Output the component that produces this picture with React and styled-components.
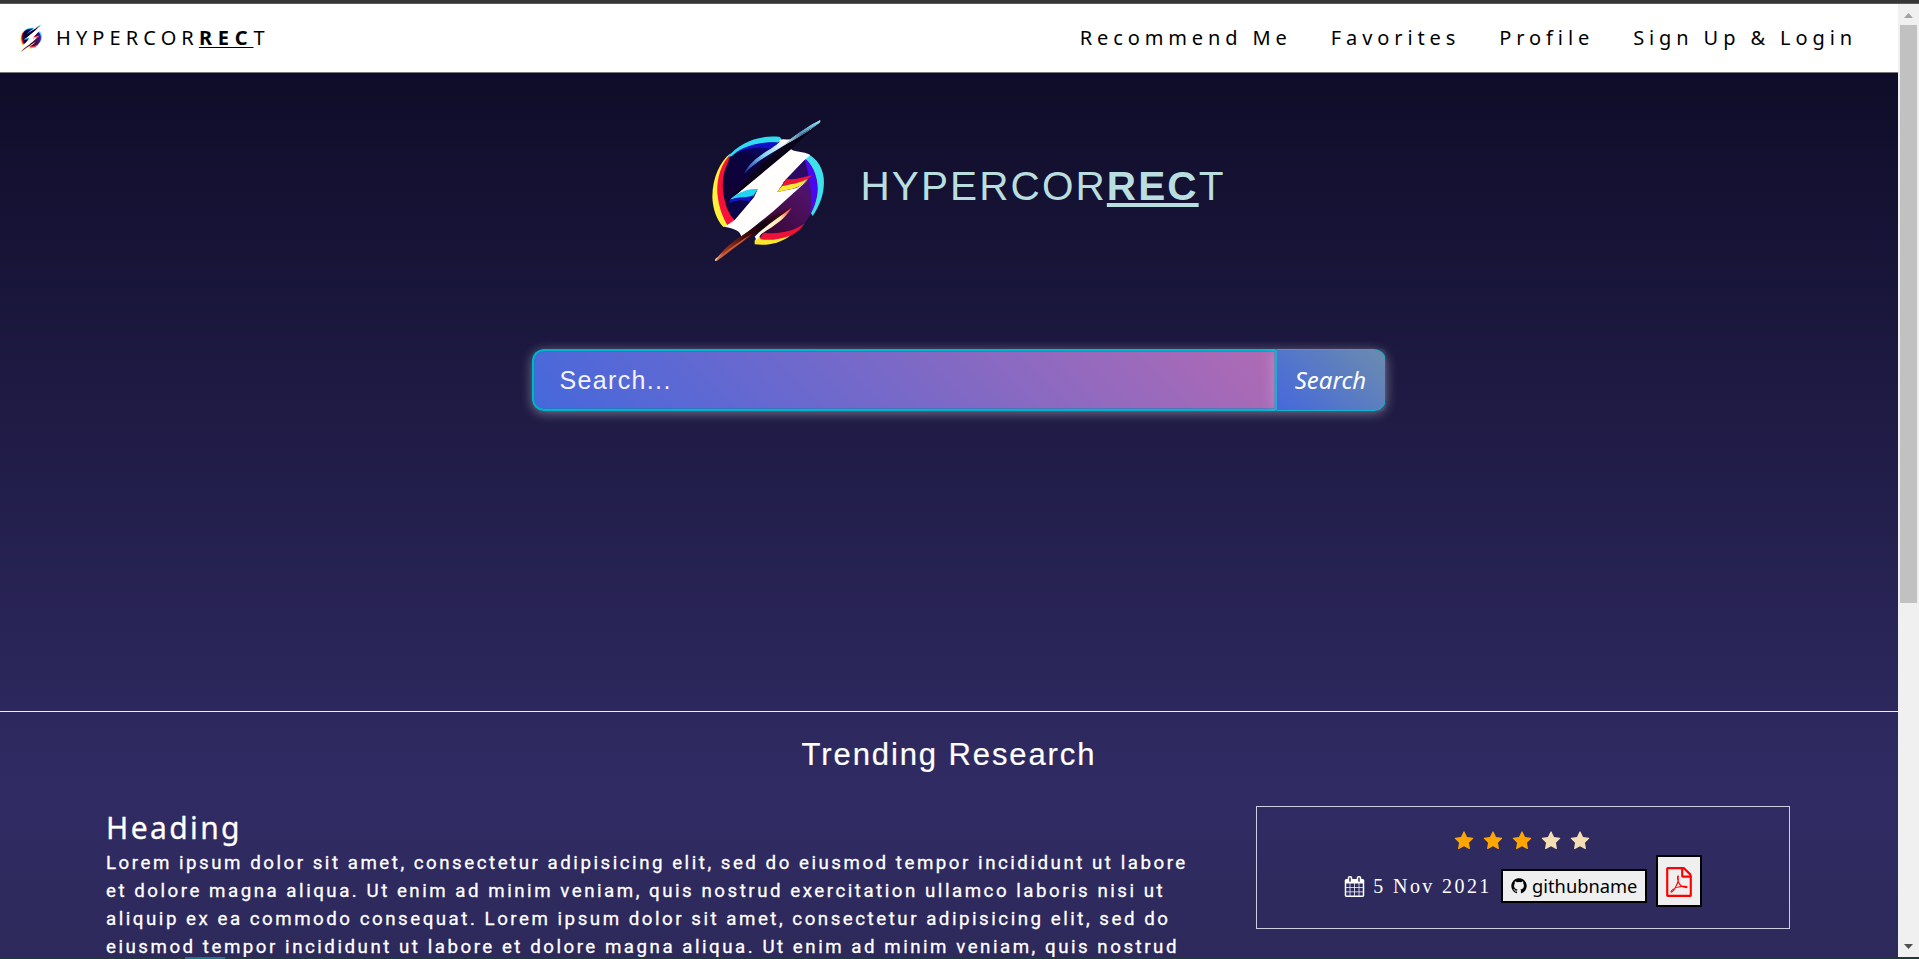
import React from "react";
import styled, { createGlobalStyle } from "styled-components";

const GlobalStyle = createGlobalStyle`
  * { box-sizing: border-box; }
  html, body { margin: 0; padding: 0; overflow: hidden; }
`;

const sans = `"Liberation Sans", Arial, sans-serif`;
const humanist = `"Noto Sans", "Open Sans", sans-serif`;

const Window = styled.div`
  display: flex;
  flex-direction: column;
  width: 1919px;
  height: 959px;
  overflow: hidden;
`;

const TopEdge = styled.div`
  flex: none;
  height: 4px;
  background: #363636;
  border-bottom: 1px solid #5b5b5b;
`;

const BottomEdge = styled.div`
  flex: none;
  display: flex;
  height: 2px;
  padding-left: 185px;
  background: #1e3a34;
`;

const EdgeMark = styled.div`
  width: 40px;
  background: #177a7c;
`;

const Viewport = styled.div`
  flex: 1;
  min-height: 0;
  display: flex;
`;

const Page = styled.div`
  flex: 1;
  min-width: 0;
  display: flex;
  flex-direction: column;
  overflow: hidden;
  background: linear-gradient(to bottom, #0f0c29, #302b63, #24243e) 0 68px / 100% 1440px;
`;

const ScrollTrack = styled.div`
  flex: none;
  display: flex;
  flex-direction: column;
  align-items: center;
  width: 21px;
  background: #f0f0f0;
`;

const ScrollArrow = styled.svg`
  flex: none;
  display: block;
  width: 21px;
  height: 21px;
  fill: ${(p) => p.$color};
`;

const ScrollThumb = styled.div`
  width: 17px;
  height: 578px;
  margin-bottom: auto;
  background: #c1c1c1;
`;

const NavBar = styled.header`
  flex: none;
  display: flex;
  align-items: center;
  height: 69px;
  padding: 0 41px 0 16px;
  background: #fff;
  border-bottom: 1px solid #777;
  font: 20px/28px ${humanist};
  color: #000;
`;

const Brand = styled.div`
  display: flex;
  align-items: center;
  gap: 9px;
  letter-spacing: 5.1px;
`;

const Underlined = styled.b`
  letter-spacing: ${(p) => p.$spacing};
  text-decoration: underline;
  text-decoration-thickness: ${(p) => p.$thick};
  text-underline-offset: ${(p) => p.$offset};
  text-decoration-skip-ink: none;
`;

const NavLinks = styled.nav`
  display: flex;
  gap: 39px;
  margin-left: auto;
  letter-spacing: 4.9px;
`;

const NavLink = styled.span`
  white-space: nowrap;
`;

const LogoMark = styled.svg`
  flex: none;
  display: block;
  width: ${(p) => p.$w}px;
  height: ${(p) => p.$h}px;
`;

const Hero = styled.section`
  flex: none;
  display: flex;
  flex-direction: column;
  align-items: center;
  height: 639px;
  border-bottom: 1px solid #f1effa;
`;

const HeroTitle = styled.div`
  display: flex;
  align-items: flex-start;
  height: 249px;
  margin-top: 27px;
  margin-left: 17px;
  gap: 11px;
`;

const HeroName = styled.h1`
  margin: 61px 0 0;
  font: 400 40.5px/50px ${sans};
  letter-spacing: 2.1px;
  color: #b9dedf;
  white-space: nowrap;
`;

const SearchBar = styled.form`
  display: flex;
  height: 62px;
  margin-left: 19px;
  width: 854px;
  border-radius: 12px;
  box-shadow: 0 2px 12px rgba(255, 255, 255, 0.4);
`;

const SearchField = styled.div`
  flex: 1;
  display: flex;
  align-items: center;
  padding: 0 0 0 26px;
  border: 2px solid #00b4cc;
  border-right: 0;
  border-radius: 12px 0 0 12px;
  background: linear-gradient(45deg, #4568dc, #b06ab3);
  box-shadow: inset 0 0 0 1px rgba(20, 130, 180, 0.55);
  font: 25px/30px ${sans};
  letter-spacing: 1.35px;
  color: #f4f2fb;
`;

const SearchButton = styled.button`
  width: 111px;
  padding: 0;
  border: 1px solid #12b3cc;
  border-left: 2px solid #2ba6cf;
  border-radius: 0 12px 12px 0;
  background: linear-gradient(45deg, #4568dc, #6b8cae);
  box-shadow: -2px 0 14px rgba(255, 255, 255, 0.22);
  clip-path: inset(0 0 0 -16px);
  font: italic 24px/30px ${humanist};
  color: #fff;
`;

const Trending = styled.section`
  flex: 1;
  min-height: 0;
  display: flex;
  flex-direction: column;
  padding-top: 25px;
`;

const SectionTitle = styled.h2`
  margin: 0;
  text-align: center;
  font: 400 31px/36px ${sans};
  letter-spacing: 1.9px;
  color: #fff;
  -webkit-text-stroke: 0.2px #fff;
`;

const Entry = styled.article`
  display: flex;
  align-items: flex-start;
  justify-content: space-between;
  padding: 33px 108px 0 106px;
`;

const EntryText = styled.div`
  width: 1110px;
  padding-top: 2px;
  color: #fff;
  -webkit-text-stroke: 0.3px #fff;
`;

const EntryHeading = styled.h3`
  margin: 0 0 1px;
  font: 400 30px/40px ${humanist};
  letter-spacing: 2.4px;
`;

const Abstract = styled.p`
  margin: 0;
  font: 400 18.72px/28.08px Roboto, sans-serif;
  letter-spacing: 2.52px;
`;

const Line = styled.span`
  display: block;
  white-space: nowrap;
`;

const MetaCard = styled.aside`
  display: flex;
  flex-direction: column;
  align-items: center;
  width: 534px;
  height: 123px;
  padding-top: 24px;
  border: 1px solid #cfcde0;
`;

const Stars = styled.div`
  display: flex;
  gap: 9px;
  margin-right: 2px;
`;

const Icon = styled.svg`
  flex: none;
  display: block;
  width: ${(p) => p.$size}px;
  height: ${(p) => p.$size}px;
  fill: ${(p) => p.$color};
`;

const MetaRow = styled.div`
  display: flex;
  align-items: flex-start;
  margin-top: 4px;
`;

const DateLabel = styled.div`
  display: flex;
  align-items: center;
  gap: 8px;
  height: 34px;
  margin: 14px 9px 0 0;
  font: 20px/24px "Liberation Serif", "Times New Roman", serif;
  letter-spacing: 2.4px;
  color: #fff;
  white-space: nowrap;
`;

const GithubButton = styled.button`
  display: flex;
  align-items: center;
  justify-content: center;
  gap: 4px;
  width: 146px;
  height: 34px;
  margin: 14px 9px 0 0;
  padding: 0;
  border: 2px solid #000;
  background: #efefef;
  font: 18.3px/24px ${humanist};
  color: #000;
`;

const PdfButton = styled.button`
  display: flex;
  align-items: center;
  justify-content: center;
  width: 46px;
  height: 52px;
  padding: 2px 0 0;
  border: 2px solid #000;
  background: #efefef;
`;

const paths = {
  star: "M1728 647q0 22-26 48l-363 354 86 500q1 7 1 20 0 21-10.5 35.5t-30.5 14.5q-19 0-40-12l-449-236-449 236q-22 12-40 12-21 0-31.5-14.5t-10.5-35.5q0-6 2-20l86-500-364-354q-25-27-25-48 0-37 56-46l502-73 225-455q19-41 49-41t49 41l225 455 502 73q56 9 56 46z",
  calendar:
    "M192 1664h288v-288h-288v288zm352 0h320v-288h-320v288zm-352-352h288v-320h-288v320zm352 0h320v-320h-320v320zm-352-384h288v-288h-288v288zm736 736h320v-288h-320v288zm-384-736h320v-288h-320v288zm768 736h288v-288h-288v288zm-384-352h320v-320h-320v320zm-352-864v-288q0-13-9.5-22.5t-22.5-9.5h-64q-13 0-22.5 9.5t-9.5 22.5v288q0 13 9.5 22.5t22.5 9.5h64q13 0 22.5-9.5t9.5-22.5zm736 864h288v-320h-288v320zm-384-384h320v-288h-320v288zm384 0h288v-288h-288v288zm32-480v-288q0-13-9.5-22.5t-22.5-9.5h-64q-13 0-22.5 9.5t-9.5 22.5v288q0 13 9.5 22.5t22.5 9.5h64q13 0 22.5-9.5t9.5-22.5zm384-64v1280q0 52-38 90t-90 38h-1408q-52 0-90-38t-38-90v-1280q0-52 38-90t90-38h128v-96q0-66 47-113t113-47h64q66 0 113 47t47 113v96h384v-96q0-66 47-113t113-47h64q66 0 113 47t47 113v96h128q52 0 90 38t38 90z",
  github:
    "M896 128q209 0 385.5 103t279.5 279.5 103 385.5q0 251-146.5 451.5t-378.5 277.5q-27 5-40-7t-13-30q0-3 .5-76.5t.5-134.5q0-97-52-142 57-6 102.5-18t94-39 81-66.5 53-105 20.5-150.5q0-119-79-206 37-91-8-204-28-9-81 11t-92 44l-38 24q-93-26-192-26t-192 26q-16-11-42.5-27t-83.5-38.5-85-13.5q-45 113-8 204-79 87-79 206 0 85 20.5 150t52.5 105 80.5 67 94 39 102.5 18q-39 36-49 103-21 10-45 15t-57 5-65.5-21.5-55.5-62.5q-19-32-48.5-52t-49.5-24l-20-3q-21 0-29 4.5t-5 11.5 9 14 13 12l7 5q22 10 43.5 38t31.5 51l10 23q13 38 44 61.5t67 30 69.5 7 55.5-3.5l23-4q0 38 .5 88.5t.5 54.5q0 18-13 30t-40 7q-232-77-378.5-277.5t-146.5-451.5q0-209 103-385.5t279.5-279.5 385.5-103z",
  pdf: "M1596 380q28 28 48 76t20 88v1152q0 40-28 68t-68 28h-1344q-40 0-68-28t-28-68v-1600q0-40 28-68t68-28h896q40 0 88 20t76 48zm-444-244v376h376q-10-29-22-41l-313-313q-12-12-41-22zm384 1528v-1024h-416q-40 0-68-28t-28-68v-416h-768v1536h1280zm-514-593q33 26 84 56 59-7 117-7 147 0 177 49 16 22 2 52 0 1-1 2l-2 2v1q-6 38-71 38-48 0-115-20t-130-53q-221 24-392 83-153 262-242 262-15 0-28-7l-24-12q-1-1-6-5-10-10-6-36 9-40 56-91.5t132-96.5q14-9 23 6 2 2 2 4 52-85 107-197 68-136 104-262-24-82-30.5-159.5t6.5-127.5q11-40 42-40h22q23 0 35 15 18 21 9 68-2 6-4 8 1 3 1 8v30q-2 123-14 192 55 164 146 238zm-576 411q52-24 137-158-51 40-87.5 84t-49.5 74zm398-920q-15 42-2 132 1-7 7-44 0-3 7-43 1-4 4-8-1-1-1-2-1-2-1-3-1-22-13-36 0 1-1 2v2zm-124 661q135-54 284-81-2-1-13-9.5t-16-13.5q-76-67-127-176-27 86-83 197-30 56-45 83zm646-16q-24-24-140-24 76 28 124 28 14 0 18-1 0-1-2-3z",
};

function Glyph({ name, size, color }) {
  return (
    <Icon viewBox="0 0 1792 1792" $size={size} $color={color} aria-hidden="true">
      <path d={paths[name]} />
    </Icon>
  );
}

function Logo({ w, h, id }) {
  const u = (n) => `${id}-${n}`;
  return (
    <LogoMark viewBox="0 0 480 540" $w={w} $h={h} aria-hidden="true">
      <defs>
        <linearGradient id={u("dark")} x1="0.6" y1="0" x2="0.3" y2="1">
          <stop offset="0" stopColor="#0a0a90" />
          <stop offset="0.25" stopColor="#0a0340" />
          <stop offset="1" stopColor="#140030" />
        </linearGradient>
        <linearGradient id={u("purple")} x1="1" y1="0" x2="0.2" y2="1">
          <stop offset="0" stopColor="#3d0ca8" />
          <stop offset="0.4" stopColor="#4f1268" />
          <stop offset="1" stopColor="#3a0834" />
        </linearGradient>
        <linearGradient id={u("tail")} gradientUnits="userSpaceOnUse" x1="76" y1="482" x2="300" y2="324">
          <stop offset="0" stopColor="#ffe0b0" />
          <stop offset="0.12" stopColor="#a83c28" />
          <stop offset="0.4" stopColor="#4a0c0c" />
          <stop offset="0.65" stopColor="#10030c" />
          <stop offset="1" stopColor="#5a0a24" />
        </linearGradient>
        <linearGradient id={u("spark")} gradientUnits="userSpaceOnUse" x1="198" y1="410" x2="306" y2="322">
          <stop offset="0" stopColor="#ffffff" />
          <stop offset="0.65" stopColor="#ffe9b0" />
          <stop offset="1" stopColor="#e02038" />
        </linearGradient>
        <linearGradient id={u("spike")} gradientUnits="userSpaceOnUse" x1="390" y1="62" x2="270" y2="140">
          <stop offset="0" stopColor="#7fe6f4" />
          <stop offset="0.5" stopColor="#4d8fb4" />
          <stop offset="1" stopColor="#c8f2f6" />
        </linearGradient>
        <linearGradient id={u("streak")} gradientUnits="userSpaceOnUse" x1="280" y1="124" x2="164" y2="220">
          <stop offset="0" stopColor="#ffffff" />
          <stop offset="0.5" stopColor="#7fd0f0" />
          <stop offset="1" stopColor="#1b2aa8" />
        </linearGradient>
      </defs>
      <path d="M122 160C90 184 68 232 67 290C68 326 80 360 100 381L122 378L100 300L100 200Z" fill="#fff03a" />
      <path d="M124 160C94 190 80 232 82 280C86 322 98 352 114 379L134 362L116 300L116 180Z" fill="#f80f3c" />
      <path d="M114 170C150 126 210 104 270 111L276 122L254 144L190 144L130 168Z" fill="#2fdcf2" />
      <path d="M262 128C210 126 158 140 128 166C96 206 92 262 106 308C112 332 122 348 134 360L200 290L306 146L276 120Z" fill={`url(#${u("dark")})`} />
      <path d="M136 158C176 132 222 124 264 128L246 148C212 138 176 144 136 158Z" fill="#1210c4" />
      <path d="M354 162C394 184 406 226 401 262C398 294 386 322 368 348L340 300L340 180Z" fill="#3fe0ee" />
      <path d="M344 176C370 198 388 240 382 282C376 324 356 358 334 380L250 404L206 404L240 300Z" fill={`url(#${u("purple")})`} />
      <path d="M346 176C374 200 386 240 380 288C376 308 370 326 360 342C370 292 362 234 338 192Z" fill="#4a08ee" />
      <path d="M222 398C262 403 310 396 344 370C324 402 292 416 262 420L204 420Z" fill="#ef1238" />
      <path d="M206 404L212 418C240 422 272 418 300 407C270 430 232 438 194 433L194 422Z" fill="#ffe62e" />
      <path d="M302 146C312 158 340 152 361 165L344 180L286 240L262 276L320 264L354 240L250 334L154 411C152 392 132 386 104 380L134 360L192 292L203 268L120 299Z" fill="#fffefd" />
      <path d="M388 70C352 104 326 124 304 147L122 298L186 222L250 160L310 116Z" fill="#0b0318" />
      <path d="M268 120C286 114 296 124 306 114C338 92 360 76 390 61C392 64 390 67 386 70C352 98 318 114 270 144C222 172 190 192 162 222C176 188 212 164 246 144C266 130 272 126 268 120Z" fill={`url(#${u("streak")})`} />
      <path d="M300 119C336 92 360 76 390 61C392 64 390 67 386 70C352 98 320 114 276 140Z" fill={`url(#${u("spike")})`} />
      <path d="M386 70C350 98 306 120 262 150L226 176C266 144 330 108 386 70Z" fill="#182a60" />
      <path d="M203 268C178 264 140 278 122 298C146 292 172 300 190 288Z" fill="#22d4f0" />
      <path d="M120 300C146 288 168 296 190 286L174 310L150 300L116 312Z" fill="#1414c8" />
      <path d="M112 312C138 300 158 300 180 304L134 358C124 346 116 330 112 312Z" fill="#0c0448" />
      <path d="M344 180L356 226L278 250Z" fill="#2c0a64" />
      <path d="M275 258L290 236C312 242 340 232 366 226C350 244 330 248 300 252Z" fill="#f21433" />
      <path d="M262 276L276 258C300 252 330 250 354 236C338 254 322 264 300 268Z" fill="#ffe632" />
      <path d="M76 483C73 480 76 475 84 470C106 444 128 424 154 408L238 352L306 320C270 354 240 376 202 398C156 424 118 458 80 482Z" fill={`url(#${u("tail")})`} />
      <path d="M80 479C112 448 152 422 186 402L156 426C128 444 104 466 80 482Z" fill="#c8603c" />
      <path d="M306 322C290 352 256 376 214 402L206 412L200 420L194 410C226 378 266 354 306 322Z" fill={`url(#${u("spark")})`} />
    </LogoMark>
  );
}

const lines = [
  "Lorem ipsum dolor sit amet, consectetur adipisicing elit, sed do eiusmod tempor incididunt ut labore",
  "et dolore magna aliqua. Ut enim ad minim veniam, quis nostrud exercitation ullamco laboris nisi ut",
  "aliquip ex ea commodo consequat. Lorem ipsum dolor sit amet, consectetur adipisicing elit, sed do",
  "eiusmod tempor incididunt ut labore et dolore magna aliqua. Ut enim ad minim veniam, quis nostrud",
];

export default function App() {
  return (
    <Window>
      <GlobalStyle />
      <TopEdge />
      <Viewport>
        <Page>
          <NavBar>
            <Brand>
              <Logo w={31} h={36} id="nav" />
              <span>
                HYPERCOR
                <Underlined $thick="1px" $offset="2px" $spacing="5.8px">REC</Underlined>T
              </span>
            </Brand>
            <NavLinks>
              {["Recommend Me", "Favorites", "Profile", "Sign Up & Login"].map((t) => (
                <NavLink key={t}>{t}</NavLink>
              ))}
            </NavLinks>
          </NavBar>
          <Hero>
            <HeroTitle>
              <Logo w={160} h={180} id="hero" />
              <HeroName>
                HYPERCOR
                <Underlined $thick="4px" $offset="3px" $spacing="2.1px">REC</Underlined>T
              </HeroName>
            </HeroTitle>
            <SearchBar>
              <SearchField>Search...</SearchField>
              <SearchButton type="button">Search</SearchButton>
            </SearchBar>
          </Hero>
          <Trending>
            <SectionTitle>Trending Research</SectionTitle>
            <Entry>
              <EntryText>
                <EntryHeading>Heading</EntryHeading>
                <Abstract>
                  {lines.map((l) => (
                    <Line key={l}>{l}</Line>
                  ))}
                </Abstract>
              </EntryText>
              <MetaCard>
                <Stars>
                  {[1, 2, 3, 4, 5].map((n) => (
                    <Glyph key={n} name="star" size={20} color={n <= 3 ? "orange" : "wheat"} />
                  ))}
                </Stars>
                <MetaRow>
                  <DateLabel>
                    <Glyph name="calendar" size={21} color="#fff" />
                    5 Nov 2021
                  </DateLabel>
                  <GithubButton type="button">
                    <Glyph name="github" size={18} color="#000" />
                    githubname
                  </GithubButton>
                  <PdfButton type="button" aria-label="PDF">
                    <Glyph name="pdf" size={30} color="red" />
                  </PdfButton>
                </MetaRow>
              </MetaCard>
            </Entry>
          </Trending>
        </Page>
        <ScrollTrack>
          <ScrollArrow viewBox="0 0 21 21" $color="#a3a3a3">
            <path d="M6 14l4.500-5 4.500 5z" />
          </ScrollArrow>
          <ScrollThumb />
          <ScrollArrow viewBox="0 0 21 21" $color="#505050">
            <path d="M6 8l4.500 5 4.500-5z" />
          </ScrollArrow>
        </ScrollTrack>
      </Viewport>
      <BottomEdge>
        <EdgeMark />
      </BottomEdge>
    </Window>
  );
}
